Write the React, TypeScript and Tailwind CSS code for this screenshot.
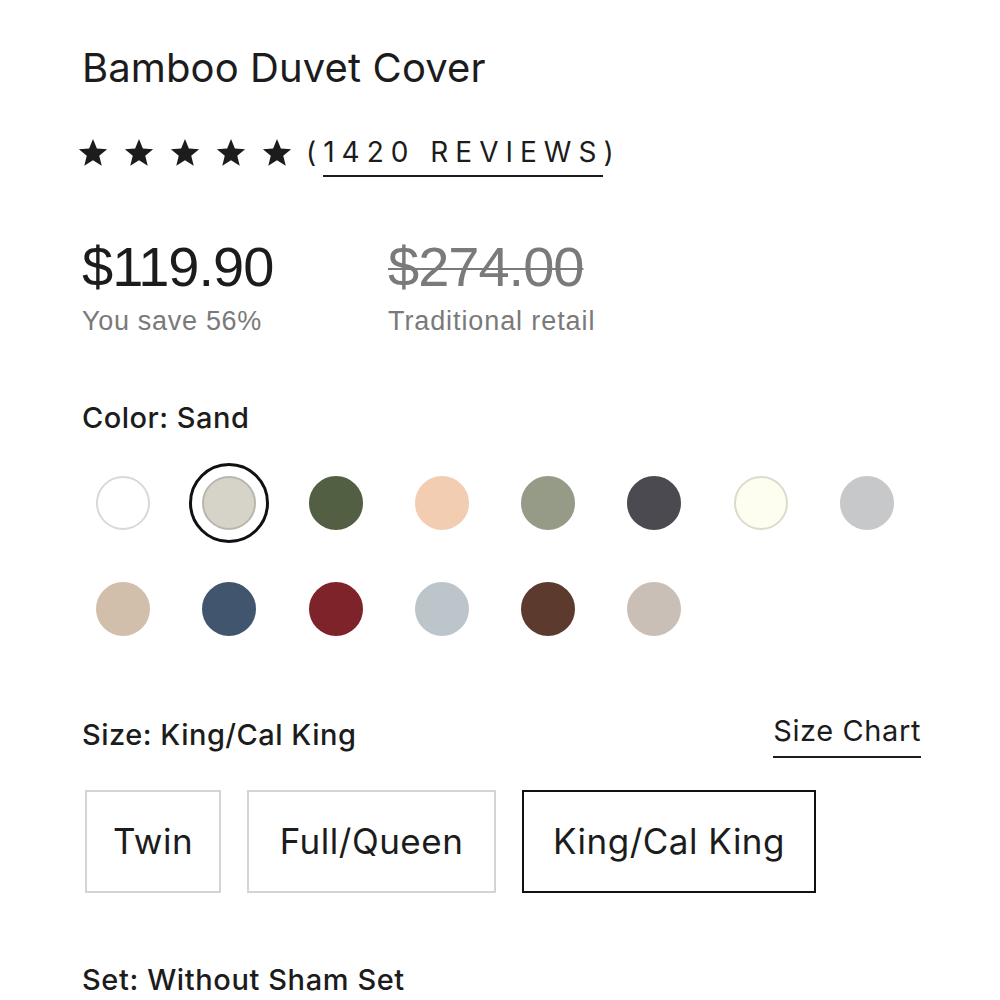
import { useState } from "react";

const colors = [
  { name: "White", hex: "#ffffff", ring: "#d9d9d9" },
  { name: "Sand", hex: "#d6d4c9", ring: "#b9b7ad" },
  { name: "Moss", hex: "#525f42" },
  { name: "Peach", hex: "#f2cdb2" },
  { name: "Sage", hex: "#969b87" },
  { name: "Charcoal", hex: "#4a4a50" },
  { name: "Ivory", hex: "#fdfdf0", ring: "#dcdccc" },
  { name: "Silver", hex: "#c7c8ca" },
  { name: "Oat", hex: "#d2bfab" },
  { name: "Navy", hex: "#42556f" },
  { name: "Cherry", hex: "#7f232b" },
  { name: "Sky", hex: "#bcc6ca" },
  { name: "Walnut", hex: "#5c3a2e" },
  { name: "Stone", hex: "#c9bfb6" },
];

const sizes = [
  { label: "Twin", w: "w-[136px]" },
  { label: "Full/Queen", w: "w-[249px]" },
  { label: "King/Cal King", w: "w-[294px]" },
];

function Star() {
  return (
    <svg width="30" height="30" viewBox="0 0 24 24">
      <path
        d="M12 1.5l3.1 7.6 8.2.6-6.3 5.3 2 8L12 18.6 5 23l2-8L.7 9.7l8.2-.6z"
        fill="#1c1c1c"
      />
    </svg>
  );
}

export default function App() {
  const [color, setColor] = useState("Sand");
  const [size, setSize] = useState("King/Cal King");

  return (
    <div
      className="min-h-screen bg-white text-[#1c1c1c] px-[82px] pt-[40px]"
      style={{ fontFamily: "Inter, 'Liberation Sans', sans-serif" }}
    >
      <h1 className="text-[40px] leading-[56px] font-normal tracking-[0.1px]">
        Bamboo Duvet Cover
      </h1>

      <div className="flex items-center mt-[36px] -ml-[4px]">
        <div className="flex gap-[16px]">
          {[0, 1, 2, 3, 4].map((i) => (
            <Star key={i} />
          ))}
        </div>
        <span className="ml-[14px] text-[28px] tracking-[0.25em] leading-[40px]">
          (
          <span className="border-b-2 border-[#1c1c1c] pb-[6px]">
            1420 REVIEWS
          </span>
          )
        </span>
      </div>

      <div className="flex mt-[65px]" style={{ fontFamily: "'Liberation Sans', Arial, sans-serif" }}>
        <div className="w-[306px]">
          <div className="text-[56px] leading-[60px] tracking-[-1px]">$119.90</div>
          <div className="text-[27px] leading-[37px] tracking-[0.7px] text-[#7a7a7a] mt-[6px]">
            You save 56%
          </div>
        </div>
        <div>
          <div className="text-[56px] leading-[60px] tracking-[-1px] text-[#7a7a7a] line-through decoration-2">
            $274.00
          </div>
          <div className="text-[27px] leading-[37px] tracking-[0.9px] text-[#7a7a7a] mt-[6px]">
            Traditional retail
          </div>
        </div>
      </div>

      <div className="text-[29px] tracking-[0.5px] font-medium mt-[58px] leading-[40px]">
        Color: {color}
      </div>

      <div className="grid grid-cols-8 w-[850px] -ml-[12px] mt-[25px] gap-y-[26px]">
        {colors.map((c) => {
          const active = c.name === color;
          return (
            <button
              key={c.name}
              onClick={() => setColor(c.name)}
              className="flex items-center justify-center h-[80px]"
            >
              <span
                className={
                  active
                    ? "flex items-center justify-center w-[80px] h-[80px] rounded-full border-[3px] border-[#111]"
                    : "flex items-center justify-center w-[80px] h-[80px]"
                }
              >
                <span
                  className="block w-[54px] h-[54px] rounded-full border-2"
                  style={{ backgroundColor: c.hex, borderColor: c.ring ?? c.hex }}
                />
              </span>
            </button>
          );
        })}
      </div>

      <div className="flex items-end justify-between mt-[62px]">
        <div className="text-[29px] tracking-[0.5px] font-medium leading-[40px]">Size: {size}</div>
        <button className="text-[29px] tracking-[0.6px] leading-[40px] border-b-2 border-[#1c1c1c] pb-[5px] -mr-[3px] -mb-[3px]">
          Size Chart
        </button>
      </div>

      <div className="flex gap-[26px] mt-[35px] ml-[3px]">
        {sizes.map((s) => (
          <button
            key={s.label}
            onClick={() => setSize(s.label)}
            className={
              s.w +
              " h-[103px] text-[35px] tracking-[0.5px] border-2 " +
              (s.label === size ? "border-[#111]" : "border-[#d4d4d4]")
            }
          >
            {s.label}
          </button>
        ))}
      </div>

      <div className="text-[29px] tracking-[0.6px] font-medium mt-[67px] leading-[40px]">
        Set: Without Sham Set
      </div>
    </div>
  );
}
